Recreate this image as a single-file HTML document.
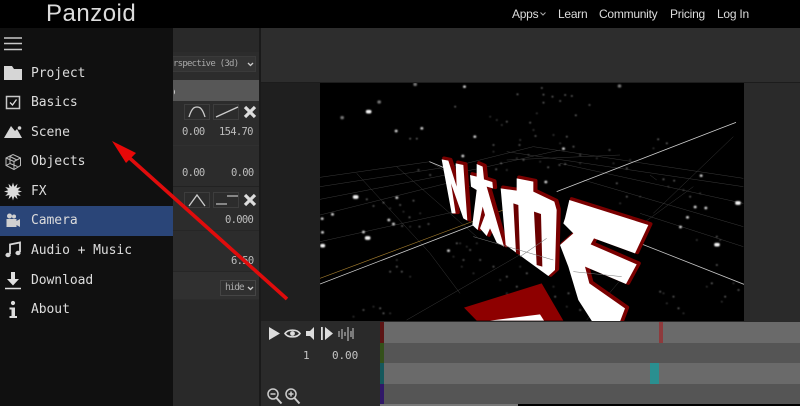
<!DOCTYPE html>
<html><head><meta charset="utf-8"><style>
*{box-sizing:border-box}
html,body{margin:0;padding:0;background:#2a2a2a}
#p{position:relative;width:800px;height:406px;overflow:hidden;background:#2a2a2a;font-family:"Liberation Sans",sans-serif;filter:blur(.3px)}
.a{position:absolute}
.n{position:absolute;top:6px;font-size:12px;line-height:16px;color:#dcdcdc;white-space:nowrap;letter-spacing:-.25px}
.m{position:absolute;left:31px;font:13px/16px "DejaVu Sans Mono","Liberation Mono",monospace;color:#dcdcdc;white-space:pre;letter-spacing:-.06px}
.v{position:absolute;font:10.5px/14px "DejaVu Sans Mono","Liberation Mono",monospace;color:#bcbcbc;white-space:pre;letter-spacing:-.7px}
.b{position:absolute;width:26px;height:16px;border:1px solid #3d3d3d;background:#2c2c2c}
svg{position:absolute;overflow:visible}
</style></head><body><div id="p">
<div class="a" style="left:0;top:0;width:800px;height:28px;background:#000"></div>
<div class="a" style="left:46px;top:-2px;font-size:24px;line-height:32px;color:#dcdcdc;letter-spacing:.5px">Panzoid</div>
<div class="n" style="left:512px">Apps</div>
<svg style="left:540px;top:12px" width="6" height="4" viewBox="0 0 6 4"><path d="M.5.5 3 3 5.500.5" fill="none" stroke="#aaa"/></svg>
<div class="n" style="left:558px">Learn</div>
<div class="n" style="left:599px">Community</div>
<div class="n" style="left:670px">Pricing</div>
<div class="n" style="left:717px">Log In</div>

<!-- toolbar + stage backgrounds -->
<div class="a" style="left:261px;top:28px;width:539px;height:54px;background:#2d2d2d"></div>
<div class="a" style="left:260px;top:82px;width:540px;height:1px;background:#1c1c1c"></div>
<div class="a" style="left:261px;top:83px;width:60px;height:238px;background:#1f1f1f"></div>
<div class="a" style="left:744px;top:83px;width:56px;height:238px;background:#2a2a2a"></div>
<div class="a" style="left:259px;top:28px;width:2px;height:378px;background:#1a1a1a"></div>

<!-- stage -->
<div class="a" style="left:320px;top:83px;width:424px;height:238px;background:#000"></div>
<svg style="left:320px;top:80px;clip-path:inset(3px 6px 4px 0)" width="430" height="245" viewBox="0 0 1290 735">
<defs><filter id="s" x="-5%" y="-5%" width="110%" height="110%"><feGaussianBlur stdDeviation="2"/></filter></defs>
<g fill="none" stroke="#3c3c3c" stroke-width="1.400">
<path d="M0 292 330 245M0 320 420 255M0 358 480 265M0 405 420 300M0 485 450 385"/>
<path d="M420 255 640 200M480 265 720 210M560 240 900 225"/>
<path d="M640 200 1270 295M560 215 1270 320M720 250 1270 370M790 300 1270 440M960 400 1270 500"/>
<path d="M110 280 330 520 420 640M230 260 470 470M330 245 450 320M260 720 590 530 680 475M800 720 910 590M900 480 1120 320M1000 400 1240 170M990 285 1010 300"/>
</g>
<path d="M0 595 550 390" stroke="#a07a2c" stroke-width="2" fill="none"/>
<path d="M0 612 460 435M710 335 1248 127" stroke="#cfcfcf" stroke-width="2.400" fill="none"/>
<path d="M328 245 370 262M960 490 1272 613" stroke="#c4c4c4" stroke-width="2.400" fill="none"/>
<path d="M432 683 665 610 730 722 470 722Z" fill="#8e0000"/>
<path d="M510 722 660 703 672 722Z" fill="#fff"/>

<g filter="url(#s)">
<path stroke="#f4f4f4" stroke-linecap="round" stroke-width="11" fill="none" d="M143 95h6M104 351h6M1251 369h6M1188 494h6M6 497h4M140 474h6"/>
<path stroke="#cfcfcf" stroke-linecap="round" stroke-width="8" fill="none" d="M228 153h1M433 20h1M464 170h1M428 228h1M305 145h1M385 512h1M1143 287h1M1125 381h1M1081 441h1M1157 384h1M1102 412h1M230 353h1M206 420h1M220 432h1M37 403h1M6 416h1M7 457h1M130 456h1M677 306h1M730 206h1"/>
<path stroke="#777" stroke-linecap="round" stroke-width="10" fill="none" d="M66 113h1M177 66h1M285 13h1M898 18h1"/>
<path stroke="#999" stroke-linecap="round" stroke-width="4" fill="none" d="M670 44h1M670 68h1M697 50h1M720 63h1M755 48h1M735 45h1M808 75h1M767 106h1M592 43h1M665 24h1M405 80h1M270 176h1M290 176h1M630 128h1M646 168h1M560 125h1M520 195h1M598 195h1M740 170h1M760 200h1M1014 178h1M1040 190h1M868 210h1M780 225h1M718 255h1M735 252h1M684 262h1M528 268h1M543 250h1M610 240h1M295 270h1M330 285h1M140 358h1M190 368h1M240 375h1M280 362h1M160 378h1M268 412h1M298 440h1M325 432h1M246 438h1M230 560h1M245 575h1M210 575h1M180 685h1M190 700h1M130 690h1M1110 350h1M1030 298h1M1062 302h1M890 310h1M920 350h1M920 265h1M1190 470h1M1190 555h1M1175 610h1M1215 650h1M1255 630h1M1075 685h1M1020 635h1M1060 650h1M590 620h1M560 590h1M620 580h1M450 510h1M430 540h1M410 490h1M520 560h1M480 540h1M705 650h1M745 640h1M780 690h1"/>
<path stroke="#666" stroke-linecap="round" stroke-width="3.600" fill="none" d="M510 110h1M530 120h1M545 135h1M650 100h1M640 150h1M700 165h1M720 190h1M600 180h1M520 215h1M560 270h1M590 235h1M625 225h1M660 245h1M780 250h1M830 235h1M880 250h1M930 240h1M1000 205h1M1045 320h1M1090 330h1M1140 340h1M1200 480h1M1130 480h1M960 350h1M900 370h1M420 490h1M440 500h1M470 490h1M400 530h1M425 560h1M460 580h1M540 600h1M600 560h1M560 640h1M700 620h1M740 680h1M230 540h1M270 590h1M160 680h1M210 700h1M100 710h1M300 400h1M270 440h1M210 385h1M250 395h1M1030 640h1M1040 670h1M1090 700h1M1205 665h1M1160 620h1M1240 610h1"/>
</g>

<!-- 3D lettering artwork from the scene -->
<g transform="translate(7 -3)" fill="#7a0000" stroke="#7a0000" stroke-width="11" stroke-linejoin="round">
<path d="M365 238 385 242 410 320 407 250 430 255 442 422 430 415 393 310 407 400 395 400Z"/>
<path d="M450 285 470 290 470 252 488 260 492 298 517 306 519 325 500 320 552 500 530 488 510 445 500 468 480 445 495 405 488 380 473 450 457 435 470 330 453 320Z"/>
<path d="M542 325 590 332 590 295 640 305 640 335 703 365 710 390 705 570 685 588 557 495Z"/>
<path d="M748 360 985 435 945 520 822 475 812 493 950 553 918 612 795 560 808 610 915 685 898 730 820 730 775 660 745 560 720 495 760 460 730 430 735 415Z"/>
</g>
<g fill="#fff">
<path d="M365 238 385 242 410 320 407 250 430 255 442 422 430 415 393 310 407 400 395 400Z"/>
<path d="M450 285 470 290 470 252 488 260 492 298 517 306 519 325 500 320 552 500 530 488 510 445 500 468 480 445 495 405 488 380 473 450 457 435 470 330 453 320Z"/>
<path d="M542 325 590 332 590 295 640 305 640 335 703 365 710 390 705 570 685 588 557 495Z"/>
<path d="M748 360 985 435 945 520 822 475 812 493 950 553 918 612 795 560 808 610 915 685 898 730 820 730 775 660 745 560 720 495 760 460 730 430 735 415Z"/>
</g>
<path d="M580 370 595 375 600 525 588 520ZM642 395 663 402 667 560 650 555Z" fill="#6a0000"/>
<path d="M460 470 700 540M600 530 680 475M760 575 905 590" stroke="#777" stroke-width="1.600" fill="none"/>
</svg>

<!-- timeline -->
<div class="a" style="left:261px;top:321px;width:119px;height:85px;background:#2a2a2a"></div>
<div class="a" style="left:384px;top:322px;width:416px;height:21px;background:#6a6a6a"></div>
<div class="a" style="left:384px;top:343px;width:416px;height:20px;background:#555"></div>
<div class="a" style="left:384px;top:363px;width:416px;height:21px;background:#6a6a6a"></div>
<div class="a" style="left:384px;top:384px;width:416px;height:20px;background:#555"></div>
<div class="a" style="left:380px;top:322px;width:4px;height:21px;background:#5c1414"></div>
<div class="a" style="left:380px;top:343px;width:4px;height:20px;background:#34501a"></div>
<div class="a" style="left:380px;top:363px;width:4px;height:21px;background:#15585c"></div>
<div class="a" style="left:380px;top:384px;width:4px;height:20px;background:#301868"></div>
<div class="a" style="left:659px;top:322px;width:4px;height:21px;background:#8e3a3c"></div>
<div class="a" style="left:650px;top:363px;width:9px;height:21px;background:#2a8f90"></div>
<div class="a" style="left:380px;top:404px;width:138px;height:2px;background:#777"></div>
<div class="a" style="left:518px;top:404px;width:282px;height:2px;background:#000"></div>
<svg style="left:265px;top:324px" width="100" height="20" viewBox="0 0 100 20">
<path d="M4 3 15 9.500 4 16Z" fill="#ddd"/>
<path d="M20 9.500C23 5 32 5 35 9.500 32 14 23 14 20 9.500Z" fill="none" stroke="#ddd" stroke-width="1.600"/><circle cx="27.500" cy="9.500" r="2.400" fill="#ddd"/>
<path d="M41 7H45L49 3V16L45 12H41Z" fill="#ddd"/>
<path d="M56 3h1.800v13H56zM60 3 68 9.500 60 16Z" fill="#ddd"/>
<path d="M74 7v6M77 5v10M80 8v4M83 3v14M86 7v6M88 4v11" stroke="#ccc" stroke-width="1" fill="none"/>
</svg>
<div class="v" style="left:303px;top:349px;color:#c4c4c4;font-size:11px;letter-spacing:-.1px">1</div>
<div class="v" style="left:332px;top:349px;color:#c4c4c4;font-size:11px;letter-spacing:-.1px">0.00</div>
<svg style="left:266px;top:388px" width="36" height="17" viewBox="0 0 36 17">
<g fill="none" stroke="#ccc" stroke-width="1.500"><circle cx="7" cy="6" r="5"/><path d="M10.500 10 15.500 15.500" stroke-width="2"/><path d="M4.500 6h5"/><circle cx="25" cy="6" r="5"/><path d="M28.500 10 33.500 15.500" stroke-width="2"/><path d="M22.500 6h5M25 3.500v5"/></g>
</svg>

<!-- side panel -->
<div class="a" style="left:173px;top:28px;width:86px;height:378px;background:#292929"></div>
<div class="a" style="left:173px;top:52px;width:86px;height:248px;background:#2c2c2c"></div>
<div class="a" style="left:173px;top:56px;width:83px;height:16px;background:#333;border:1px solid #3a3a3a;border-left:0"></div>
<div class="a" style="left:173px;top:57px;font:9px/14px 'DejaVu Sans Mono',monospace;color:#aaa;white-space:pre;letter-spacing:-.75px">rspective (3d)</div>
<svg style="left:247px;top:62px" width="7" height="5" viewBox="0 0 7 5"><path d="M1 1 3.500 3.500 6 1" fill="none" stroke="#ccc" stroke-width="1.300"/></svg>
<div class="a" style="left:173px;top:80px;width:86px;height:21px;background:#575757"></div>
<div class="a" style="left:173px;top:85px;font:11px/14px 'DejaVu Sans Mono',monospace;color:#ccc;width:2px;overflow:hidden">c</div>
<div class="a" style="left:173px;top:145px;width:86px;height:1px;background:#303030"></div>
<div class="a" style="left:173px;top:186px;width:86px;height:1px;background:#222"></div>
<div class="a" style="left:173px;top:230px;width:86px;height:1px;background:#262626"></div>
<div class="a" style="left:173px;top:272px;width:86px;height:27px;background:#303030"></div>
<div class="a" style="left:173px;top:271px;width:86px;height:1px;background:#262626"></div>
<div class="b" style="left:184px;top:104px"></div><div class="b" style="left:213px;top:104px"></div>
<div class="b" style="left:184px;top:192px"></div><div class="b" style="left:213px;top:192px"></div>
<svg style="left:184px;top:104px" width="76" height="16" viewBox="0 0 76 16">
<path d="M5 13C8 3 11 3 13 3S18 3 21 13" fill="none" stroke="#ccc" stroke-width="1.300"/>
<path d="M32 13 54 3" stroke="#ccc" stroke-width="1.300"/>
<path d="M61 3 71 13M71 3 61 13" stroke="#ddd" stroke-width="3.200"/>
</svg>
<svg style="left:184px;top:192px" width="76" height="16" viewBox="0 0 76 16">
<path d="M5 14 13 3 21 14" fill="none" stroke="#ccc" stroke-width="1.300"/>
<path d="M32 12H43M43 4H54" stroke="#bbb" stroke-width="1.300"/>
<path d="M61 3 71 13M71 3 61 13" stroke="#ddd" stroke-width="3.200"/>
</svg>
<div class="v" style="left:182px;top:125px">0.00</div>
<div class="v" style="left:219px;top:125px">154.70</div>
<div class="v" style="left:182px;top:166px">0.00</div>
<div class="v" style="left:231px;top:166px">0.00</div>
<div class="v" style="left:225px;top:213px">0.000</div>
<div class="v" style="left:231px;top:254px">6.50</div>
<div class="a" style="left:220px;top:280px;width:36px;height:16px;background:#303030;border:1px solid #454545"></div>
<div class="a" style="left:225px;top:281px;font:9.500px/14px 'DejaVu Sans Mono',monospace;color:#aaa;letter-spacing:-1.100px">hide</div>
<svg style="left:247px;top:286px" width="7" height="5" viewBox="0 0 7 5"><path d="M1 1 3.500 3.500 6 1" fill="none" stroke="#ccc" stroke-width="1.300"/></svg>

<!-- sidebar -->
<div class="a" style="left:0;top:28px;width:173px;height:378px;background:#101010"></div>
<div class="a" style="left:0;top:206px;width:173px;height:30px;background:#2a4578"></div>
<svg style="left:0;top:28px" width="173" height="378" viewBox="0 28 173 378">
<path d="M4 38H22M4 43.500H22M4 49.500H22" stroke="#c8c8c8" stroke-width="1.500" fill="none"/>
<path d="M4 66H12L14 69H22V80H4Z" fill="#d6d6d6"/>
<path d="M6.500 96.500H19.500V108.500H6.500Z" fill="none" stroke="#c8c8c8" stroke-width="1.500"/>
<path d="M10 102.500 12.500 105 16.500 99.500" fill="none" stroke="#ddd" stroke-width="1.300"/>
<path d="M4 138 11 126 15 131 17 129 22 138Z" fill="#d6d6d6"/><circle cx="19.500" cy="128" r="1.800" fill="#d6d6d6"/>
<path d="M6 158 13 154.500 20.500 158V165.500L14 169.500 6 165.500ZM6 158 14 161.500V169.500M14 161.500 20.500 158M10 156.500V163.500L6 165.500M10 163.500 17.500 166.500M10 156.500 17 160" fill="none" stroke="#bbb" stroke-width="1"/>
<path d="M13 182.500 14.300 186.700 17.500 183.700 16.500 188 20.800 187 17.800 190.200 22 191.500 17.800 192.800 20.800 196 16.500 195 17.500 199.300 14.300 196.300 13 200.500 11.700 196.300 8.500 199.300 9.500 195 5.200 196 8.200 192.800 4 191.500 8.200 190.200 5.200 187 9.500 188 8.500 183.700 11.700 186.700Z" fill="#dcdcdc"/>
<path d="M6.500 219H16.500V227H6.500ZM16.500 221 20 219V227L16.500 225Z" fill="#d0d0d0"/><circle cx="9.500" cy="216" r="2.500" fill="#d0d0d0"/><circle cx="14" cy="216.500" r="2" fill="#d0d0d0"/>
<path d="M10 254V244.500L20 242.500V252" fill="none" stroke="#d8d8d8" stroke-width="1.800"/><ellipse cx="8" cy="255" rx="2.600" ry="2.200" fill="#d8d8d8"/><ellipse cx="18" cy="253" rx="2.600" ry="2.200" fill="#d8d8d8"/>
<path d="M11 272H15V279H19L13 285.500 7 279H11Z" fill="#e0e0e0"/><path d="M5 288.500H21" stroke="#e0e0e0" stroke-width="1.500"/>
<circle cx="13" cy="303" r="2.100" fill="#ddd"/><path d="M9.500 307.500H15V316H17V318H9.500V316H11.500V309.500H9.500Z" fill="#ddd"/>
</svg>
<div class="m" style="top:66px">Project</div>
<div class="m" style="top:95px">Basics</div>
<div class="m" style="top:125px">Scene</div>
<div class="m" style="top:154px">Objects</div>
<div class="m" style="top:184px">FX</div>
<div class="m" style="top:213px">Camera</div>
<div class="m" style="top:243px">Audio + Music</div>
<div class="m" style="top:273px">Download</div>
<div class="m" style="top:302px">About</div>

<!-- arrow -->
<svg style="left:0;top:0" width="800" height="406" viewBox="0 0 800 406">
<path d="M287 299 124 153" stroke="#e00c0c" stroke-width="3.600" fill="none"/>
<path d="M112 141 136 153 126 163Z" fill="#e80808"/>
</svg>
</div></body></html>
